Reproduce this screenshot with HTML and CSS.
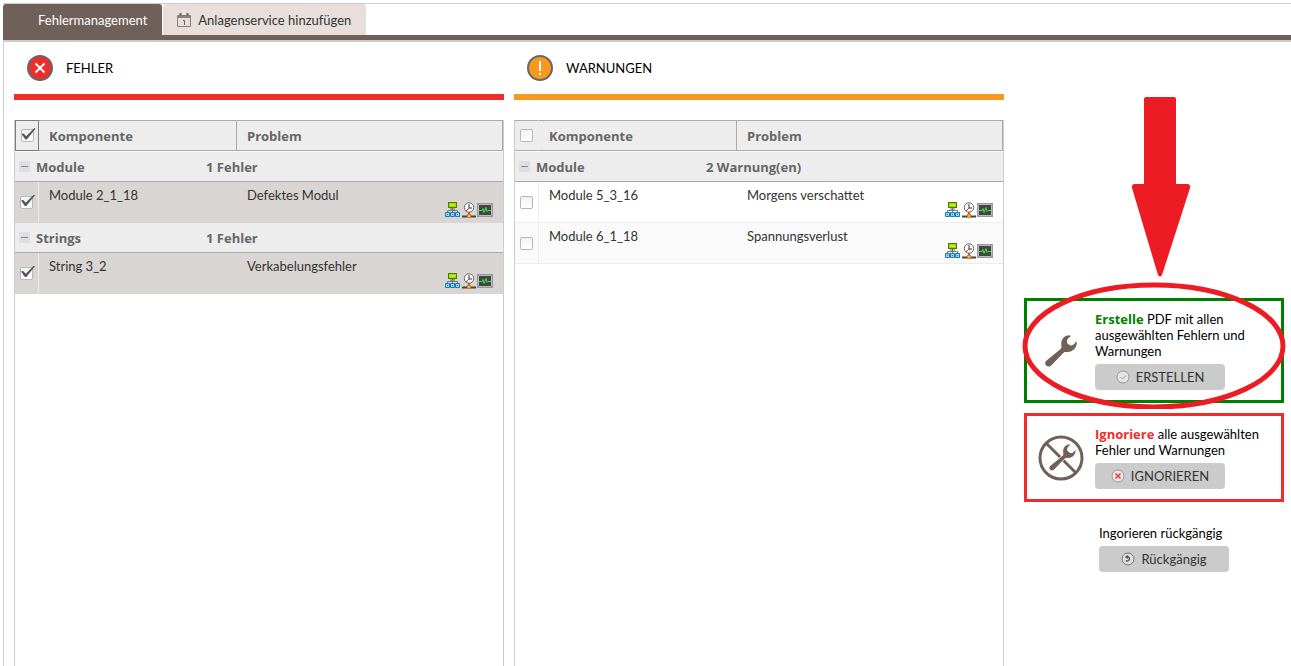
FILE: index.html
```html
<!DOCTYPE html>
<html lang="de">
<head>
<meta charset="utf-8">
<title>Fehlermanagement</title>
<link rel="stylesheet" href="styles.css">
</head>
<body>
<svg class="defs" aria-hidden="true">
  <defs>
    <symbol id="tools" viewBox="0 0 48 16">
      <path d="M7.500 6v5M2.500 11V8.500h10V11" fill="none" stroke="#777"/>
      <rect x="3.500" y="0.500" width="8" height="5" fill="#a5d500" stroke="#438000"/>
      <path d="M5 2h5v2H5z" fill="#c8ea20"/>
      <path d="M5 7h5" stroke="#666"/>
      <g fill="#9bdcfa" stroke="#1878b8"><path d="M.500 10.500h4v4h-4zM5.500 10.500h4v4h-4zM10.500 10.500h4v4h-4z"/></g>
      <path d="M2 12h1v1H2zM7 12h1v1H7zM12 12h1v1h-1z" fill="#1878b8"/>
      <path d="M17 14.500h14" stroke="#444" stroke-width="2"/>
      <path d="M24 10v4" stroke="#777" stroke-width="2"/>
      <circle cx="24" cy="5.500" r="4.700" fill="#fff" stroke="#666"/>
      <path d="M24 2v4h3" fill="none" stroke="#333"/>
      <path d="M24 6l-3 3" stroke="#e22" />
      <rect x="22.500" y="12.500" width="3" height="3" fill="#ffb43c" stroke="#d88010"/>
      <rect x="32.500" y="1.500" width="15" height="13" fill="#444" stroke="#999"/>
      <path d="M33.500 13.500v-11h13v11z" fill="none" stroke="#bbb"/>
      <path d="M34 8.500h3l1-2 1 4 2-5 1 4 1-1h3" fill="none" stroke="#35ea45"/>
    </symbol>
    <symbol id="wrench" viewBox="-1 -1 34 34">
      <path d="M25 .300C20 0 15 4 16.500 11.500 16.700 12.800 16 13.500 15 14.500L1.300 25.700C-2 29 2.500 33.500 6 30.700L18 18.200C19 17.200 20 16.700 21.500 17 27.500 17.600 32 13 31.800 7.500L30.700 6.500C30 9 27.500 11 24.800 10.200L22.300 8.200C21.300 5.500 22.500 3 25.600 1.500Z" fill="#6f6059"/>
    </symbol>
  </defs>
</svg>
<nav class="tabs">
  <button class="tab tab-active" type="button">Fehlermanagement</button>
  <button class="tab" type="button">
    <svg class="tab-icon" viewBox="0 0 14 14" width="14" height="14" aria-hidden="true">
      <path d="M.500 2.500h13v11H.500zM.500 4.500h13" fill="none" stroke="#8d817b"/>
      <path d="M1 3h12v2H1z" fill="#8d817b"/>
      <path d="M3.500 0v3M10.500 0v3" stroke="#6f6059" stroke-width="2"/>
      <path d="M6 7.500h1.500V12" fill="none" stroke="#6f6059"/>
    </svg>
    Anlagenservice hinzufügen
  </button>
</nav>
<main class="content">
  <section class="column column-error">
    <h2 class="column-title">
      <svg viewBox="0 0 26 26" width="26" height="26" aria-hidden="true"><circle cx="13" cy="13" r="12" fill="#ef2d2a" stroke="#666" stroke-width="2"/><path d="m8.500 8.500 9 9m0-9-9 9" stroke="#fff" stroke-width="2"/></svg>
      FEHLER
    </h2>
    <div class="panel">
      <table class="grid">
        <thead>
          <tr>
            <th class="check check-focus"><input type="checkbox" aria-label="Alle Fehler auswählen" checked></th>
            <th class="component">Komponente</th>
            <th>Problem</th>
          </tr>
        </thead>
        <tbody>
          <tr class="group"><td colspan="3"><div class="group-line"><button class="fold" type="button" aria-label="Module einklappen"></button><span class="group-name">Module</span><span>1 Fehler</span></div></td></tr>
          <tr class="selected">
            <td class="check"><input type="checkbox" aria-label="Module 2_1_18" checked></td>
            <td>Module 2_1_18</td>
            <td><div class="problem">Defektes Modul<svg class="tools" aria-hidden="true"><use href="#tools"/></svg></div></td>
          </tr>
          <tr class="group"><td colspan="3"><div class="group-line"><button class="fold" type="button" aria-label="Strings einklappen"></button><span class="group-name">Strings</span><span>1 Fehler</span></div></td></tr>
          <tr class="selected">
            <td class="check"><input type="checkbox" aria-label="String 3_2" checked></td>
            <td>String 3_2</td>
            <td><div class="problem">Verkabelungsfehler<svg class="tools" aria-hidden="true"><use href="#tools"/></svg></div></td>
          </tr>
        </tbody>
      </table>
    </div>
  </section>
  <section class="column column-warning">
    <h2 class="column-title">
      <svg viewBox="0 0 26 26" width="26" height="26" aria-hidden="true"><circle cx="13" cy="13" r="12" fill="#f8981d" stroke="#666" stroke-width="2"/><path d="M13 6v10m0 2v2" stroke="#fff" stroke-width="2"/></svg>
      WARNUNGEN
    </h2>
    <div class="panel">
      <table class="grid">
        <thead>
          <tr>
            <th class="check"><input type="checkbox" aria-label="Alle Warnungen auswählen"></th>
            <th class="component">Komponente</th>
            <th>Problem</th>
          </tr>
        </thead>
        <tbody>
          <tr class="group"><td colspan="3"><div class="group-line"><button class="fold" type="button" aria-label="Module einklappen"></button><span class="group-name">Module</span><span>2 Warnung(en)</span></div></td></tr>
          <tr>
            <td class="check"><input type="checkbox" aria-label="Module 5_3_16"></td>
            <td>Module 5_3_16</td>
            <td><div class="problem">Morgens verschattet<svg class="tools" aria-hidden="true"><use href="#tools"/></svg></div></td>
          </tr>
          <tr class="alternate">
            <td class="check"><input type="checkbox" aria-label="Module 6_1_18"></td>
            <td>Module 6_1_18</td>
            <td><div class="problem">Spannungsverlust<svg class="tools" aria-hidden="true"><use href="#tools"/></svg></div></td>
          </tr>
        </tbody>
      </table>
    </div>
  </section>
  <aside class="actions">
    <section class="card card-create">
      <svg class="card-icon" viewBox="0 0 46 46" aria-hidden="true"><use href="#wrench" x="6" y="6" width="34" height="34"/></svg>
      <div>
        <p class="card-text"><strong>Erstelle</strong> PDF mit allen ausgewählten Fehlern und Warnungen</p>
        <button class="action" type="button">
          <svg viewBox="0 0 14 14" width="14" height="14" aria-hidden="true"><circle cx="7" cy="7" r="6" fill="#e8e4e2" stroke="#999"/><path d="m4.500 7 2 2 3.500-3.500" fill="none" stroke="#6cbf6c"/></svg>
          ERSTELLEN
        </button>
      </div>
      <svg class="marker" viewBox="0 0 264 313" width="264" height="313" aria-hidden="true">
        <path d="M124 1h28q2 0 2 2v85h12q3 1 2 4l-28 87q-2 3-4 0l-26-87q-1-3 2-4h10V3q0-2 2-2z" fill="#ed1c24"/>
        <ellipse cx="132" cy="250" rx="129" ry="61" fill="none" stroke="#ed1c24" stroke-width="5"/>
      </svg>
    </section>
    <section class="card card-ignore">
      <svg class="card-icon" viewBox="0 0 46 46" aria-hidden="true"><circle cx="23" cy="23" r="21" fill="none" stroke="#6f6059" stroke-width="3"/><path d="m8 8 30 30" stroke="#6f6059" stroke-width="3"/><use href="#wrench" x="10" y="8" width="29" height="29" stroke="#fff" stroke-width="1"/></svg>
      <div>
        <p class="card-text"><strong>Ignoriere</strong> alle ausgewählten Fehler und Warnungen</p>
        <button class="action" type="button">
          <svg viewBox="0 0 14 14" width="14" height="14" aria-hidden="true"><circle cx="7" cy="7" r="6" fill="#e8e4e2" stroke="#999"/><path d="m4.500 4.500 5 5m0-5-5 5" stroke="#ef2d2a" stroke-width="1.300"/></svg>
          IGNORIEREN
        </button>
      </div>
    </section>
    <section class="undo">
      <p class="card-text">Ingorieren rückgängig</p>
      <button class="action" type="button">
        <svg viewBox="0 0 14 14" width="14" height="14" aria-hidden="true"><circle cx="7" cy="7" r="6" fill="#e0dcda" stroke="#777"/><path d="M4.500 5h3a2.200 2.200 0 1 1-2.700 3.500" fill="none" stroke="#555" stroke-width="1.400"/><path d="M7 3v4L4 5z" fill="#555"/></svg>
        Rückgängig
      </button>
    </section>
  </aside>
</main>
</body>
</html>
```
FILE: styles.css
```css
* { box-sizing: border-box; }
body {
  margin: 0;
  padding: 3px 0 0 3px;
  min-height: 100vh;
  display: flex;
  flex-direction: column;
  background: #fff;
  color: #000;
  font: 13px/16px Lato, "Noto Sans", sans-serif;
}
button { font: inherit; color: inherit; border: 0; }
.defs { position: absolute; width: 0; height: 0; }

.tabs {
  display: flex;
  gap: 1px;
  border-top: 1px solid #ccc;
  border-bottom: 5px solid #6f6059;
}
.tab {
  display: flex;
  align-items: center;
  gap: 7px;
  height: 31px;
  padding: 0 15px 0 14px;
  border-radius: 3px 3px 0 0;
  background: #e8dfdd;
  color: #333;
}
.tab-active { padding: 0 15px 0 35px; background: #6f6059; color: #fff; }

.content {
  flex: 1;
  display: flex;
  padding: 13px 7px 0 10px;
  border-top: 2px solid #ccc;
  border-left: 1px solid #ccc;
}
.column { flex: 1; display: flex; flex-direction: column; }
.column + .column { margin-left: 10px; }
.column-title {
  display: flex;
  align-items: center;
  gap: 13px;
  margin: 0 0 20px;
  padding: 0 0 13px 13px;
  border-bottom: 6px solid #ef2d2a;
  font-size: 13px;
  font-weight: 400;
}
.column-warning .column-title { border-color: #f8981d; }
.panel {
  flex: 1;
  border: 1px solid #ccc;
  border-width: 0 1px;
}

.grid { width: 100%; table-layout: fixed; border-collapse: separate; border-spacing: 0; }
.grid th {
  height: 31px;
  padding: 0 10px;
  border: 1px solid #aaa;
  border-width: 1px 1px 1px 0;
  background: #ededed;
  color: #666;
  text-align: left;
}
.grid th, .group, strong { font-family: "Open Sans", "Noto Sans", sans-serif; font-weight: 700; }
.grid th.check { width: 24px; border-right-color: #ededed; }
.grid th.check-focus { border: 1px solid #857a75; }
.grid th.component { width: 198px; }
.grid td { padding: 5px 10px 4px; vertical-align: top; color: #333; border-bottom: 1px solid #ededed; }
.grid .check { padding: 0; text-align: center; vertical-align: middle; }
.grid td.check { border-right: 1px solid #ededed; }
.selected td { background: #d9d5d2; border-bottom-color: #d9d5d2; }
.alternate td { background: #fafafa; }
.grid .group td { height: 30px; padding: 0 4px; vertical-align: middle; background: #ededed; color: #666; border-bottom: 1px solid #aaa; }
.grid .group:first-child td { height: 31px; border-top: 1px solid #fafafa; }
.group-line { display: flex; align-items: center; }
.group-name { width: 176px; padding-left: 6px; }
.fold {
  display: grid;
  place-items: center;
  width: 11px;
  height: 11px;
  padding: 0;
  background: #dcdee2;
}
.fold::before { content: ""; width: 7px; height: 1px; background: #888; }
.problem { display: flex; justify-content: space-between; min-height: 31px; }
.tools { width: 48px; height: 16px; align-self: flex-end; }

input[type="checkbox"] {
  appearance: none;
  position: relative;
  display: block;
  width: 13px;
  height: 13px;
  margin: 0 auto;
  border: 1px solid #b8b8b8;
  border-radius: 2px;
  background: linear-gradient(#f2f2f2, #fff);
}
input[type="checkbox"]:checked::before {
  content: "";
  position: absolute;
  left: 0;
  top: -2px;
  width: 14px;
  height: 12px;
  background: #555;
  clip-path: polygon(0 50%, 16% 45%, 34% 68%, 92% 0, 100% 6%, 38% 96%, 28% 96%);
}

.actions { flex: 0 0 260px; margin-left: 20px; padding-top: 243px; }
.card {
  position: relative;
  display: flex;
  align-items: center;
  gap: 11px;
  margin-bottom: 10px;
  padding: 10px 11px;
  border: 3px solid #ef2d2a;
}
.card-create { border-color: #008000; }
.card-icon { flex: none; width: 46px; height: 46px; }
.card-text { margin: 0 0 5px; }
.card strong { line-height: 1; }
.card-create strong { color: #008000; }
.card-ignore strong { color: #ef2d2a; }
.marker { position: absolute; left: -5px; top: -205px; pointer-events: none; }
.action {
  display: flex;
  align-items: center;
  justify-content: center;
  gap: 6px;
  width: 130px;
  height: 26px;
  padding: 0;
  border-radius: 4px;
  background: #cbcbcb;
  color: #333;
}
.undo { padding: 13px 0 0 75px; }
```
